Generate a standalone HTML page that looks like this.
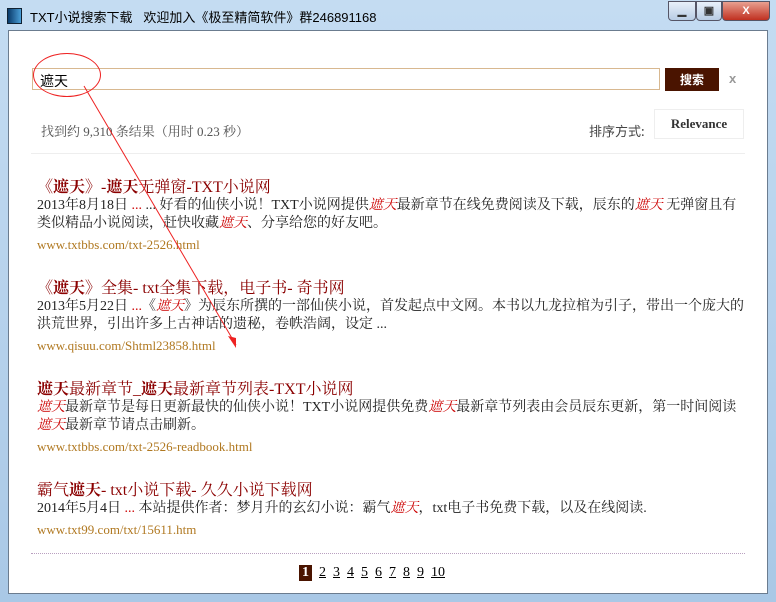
<!DOCTYPE html><html><head><meta charset="utf-8"><style>
body{margin:0;width:776px;height:602px;overflow:hidden;background:linear-gradient(#c4dcf2,#a9c8e6);font-family:"Liberation Serif","Noto Serif CJK SC",serif;position:relative}
.title{position:absolute;left:30px;top:7px;font:13px "Liberation Sans","Noto Sans CJK SC",sans-serif;color:#000}
.ico{position:absolute;left:7px;top:8px;width:13px;height:14px;background:linear-gradient(90deg,#0a3a6a,#4a9fd8);border:1px solid #123}
.btns{position:absolute;right:6px;top:1px;display:flex}
.btns div{height:18px;border:1px solid #556;border-radius:0 0 4px 4px;background:linear-gradient(#e8f0fa,#b8cce4);font:bold 11px sans-serif;text-align:center;line-height:18px;color:#333}
.client{position:absolute;left:8px;top:30px;width:758px;height:562px;background:#fff;border:1px solid #6b7c8f}
.abs{position:absolute}
.r{color:#8b0000;font-size:16px}
.d{color:#222;font-size:14px;line-height:18px}
.u{color:#b07820;font-size:13px}
em{color:#c00;font-style:italic}
b{font-weight:bold}
.pg span{display:inline-block;margin-right:7px;text-decoration:underline;font-size:14px;color:#000}
</style></head><body>
<div class="ico"></div>
<div class="title">TXT小说搜索下载&nbsp;&nbsp;&nbsp;欢迎加入《极至精简软件》群246891168</div>
<div class="btns"><div style="width:26px">▁</div><div style="width:24px">▣</div><div style="width:46px;background:linear-gradient(#e8a090,#c03020);color:#fff">X</div></div>
<div class="client">
<div class="abs" style="left:23px;top:37px;width:626px;height:20px;border:1px solid #d8b890"></div>
<div class="abs" style="left:31px;top:40px;font:14px 'Liberation Sans','Noto Sans CJK SC',sans-serif">遮天</div>
<div class="abs" style="left:24px;top:22px;width:66px;height:42px;border:1px solid #e22;border-radius:50%"></div>
<div class="abs" style="left:656px;top:37px;width:54px;height:23px;background:#4a1400;color:#fff;font:bold 12px 'Noto Sans CJK SC',sans-serif;text-align:center;line-height:23px">搜索</div>
<div class="abs" style="left:720px;top:40px;color:#999;font:bold 13px sans-serif">x</div>
<div class="abs" style="left:32px;top:90px;color:#555;font-size:13px">找到约 9,310 条结果（用时 0.23 秒）</div>
<div class="abs" style="left:580px;top:90px;color:#444;font-size:13px;font-family:'Noto Sans CJK SC',sans-serif">排序方式:</div>
<div class="abs" style="left:645px;top:78px;width:88px;height:28px;border:1px solid #eee;color:#333;font:bold 13px 'Liberation Serif',serif;line-height:28px;text-align:center">Relevance</div>
<div class="abs" style="left:22px;top:122px;width:714px;border-top:1px solid #eee"></div>

<div class="abs" style="left:28px;top:143px;width:710px">
<div class="r"><b>《遮天》</b>-<b>遮天</b>无弹窗-TXT小说网</div>
<div class="d">2013年8月18日 <span style="color:#c00">...</span> ... 好看的仙侠小说！TXT小说网提供<em>遮天</em>最新章节在线免费阅读及下载，辰东的<em>遮天</em> 无弹窗且有类似精品小说阅读，赶快收藏<em>遮天</em>、分享给您的好友吧。</div>
<div class="u" style="margin-top:4px">www.txtbbs.com/txt-2526.html</div>
</div>
<div class="abs" style="left:28px;top:244px;width:710px">
<div class="r"><b>《遮天》</b>全集- txt全集下载，电子书- 奇书网</div>
<div class="d">2013年5月22日 <span style="color:#c00">...</span>《<em>遮天</em>》为辰东所撰的一部仙侠小说，首发起点中文网。本书以九龙拉棺为引子，带出一个庞大的洪荒世界，引出许多上古神话的遗秘，卷帙浩阔，设定 ...</div>
<div class="u" style="margin-top:4px">www.qisuu.com/Shtml23858.html</div>
</div>
<div class="abs" style="left:28px;top:345px;width:710px">
<div class="r"><b>遮天</b>最新章节_<b>遮天</b>最新章节列表-TXT小说网</div>
<div class="d"><em>遮天</em>最新章节是每日更新最快的仙侠小说！TXT小说网提供免费<em>遮天</em>最新章节列表由会员辰东更新，第一时间阅读<em>遮天</em>最新章节请点击刷新。</div>
<div class="u" style="margin-top:4px">www.txtbbs.com/txt-2526-readbook.html</div>
</div>
<div class="abs" style="left:28px;top:446px;width:710px">
<div class="r">霸气<b>遮天</b>- txt小说下载- 久久小说下载网</div>
<div class="d">2014年5月4日 <span style="color:#c00">...</span> 本站提供作者：梦月升的玄幻小说：霸气<em>遮天</em>，txt电子书免费下载，以及在线阅读.</div>
<div class="u" style="margin-top:4px">www.txt99.com/txt/15611.htm</div>
</div>
<div class="abs" style="left:22px;top:522px;width:714px;border-top:1px dotted #b9a0c0"></div>
<div class="abs pg" style="left:290px;top:532px"><span style="background:#4a1400;color:#fff;text-decoration:none;padding:0 3px;font-weight:bold">1</span><span>2</span><span>3</span><span>4</span><span>5</span><span>6</span><span>7</span><span>8</span><span>9</span><span>10</span></div>
</div>
<svg class="abs" style="left:0;top:0" width="776" height="602"><line x1="84" y1="86" x2="236" y2="345" stroke="#e22" stroke-width="1"/><polygon points="236,348 228,336 236,338" fill="#e22"/></svg>
</body></html>
